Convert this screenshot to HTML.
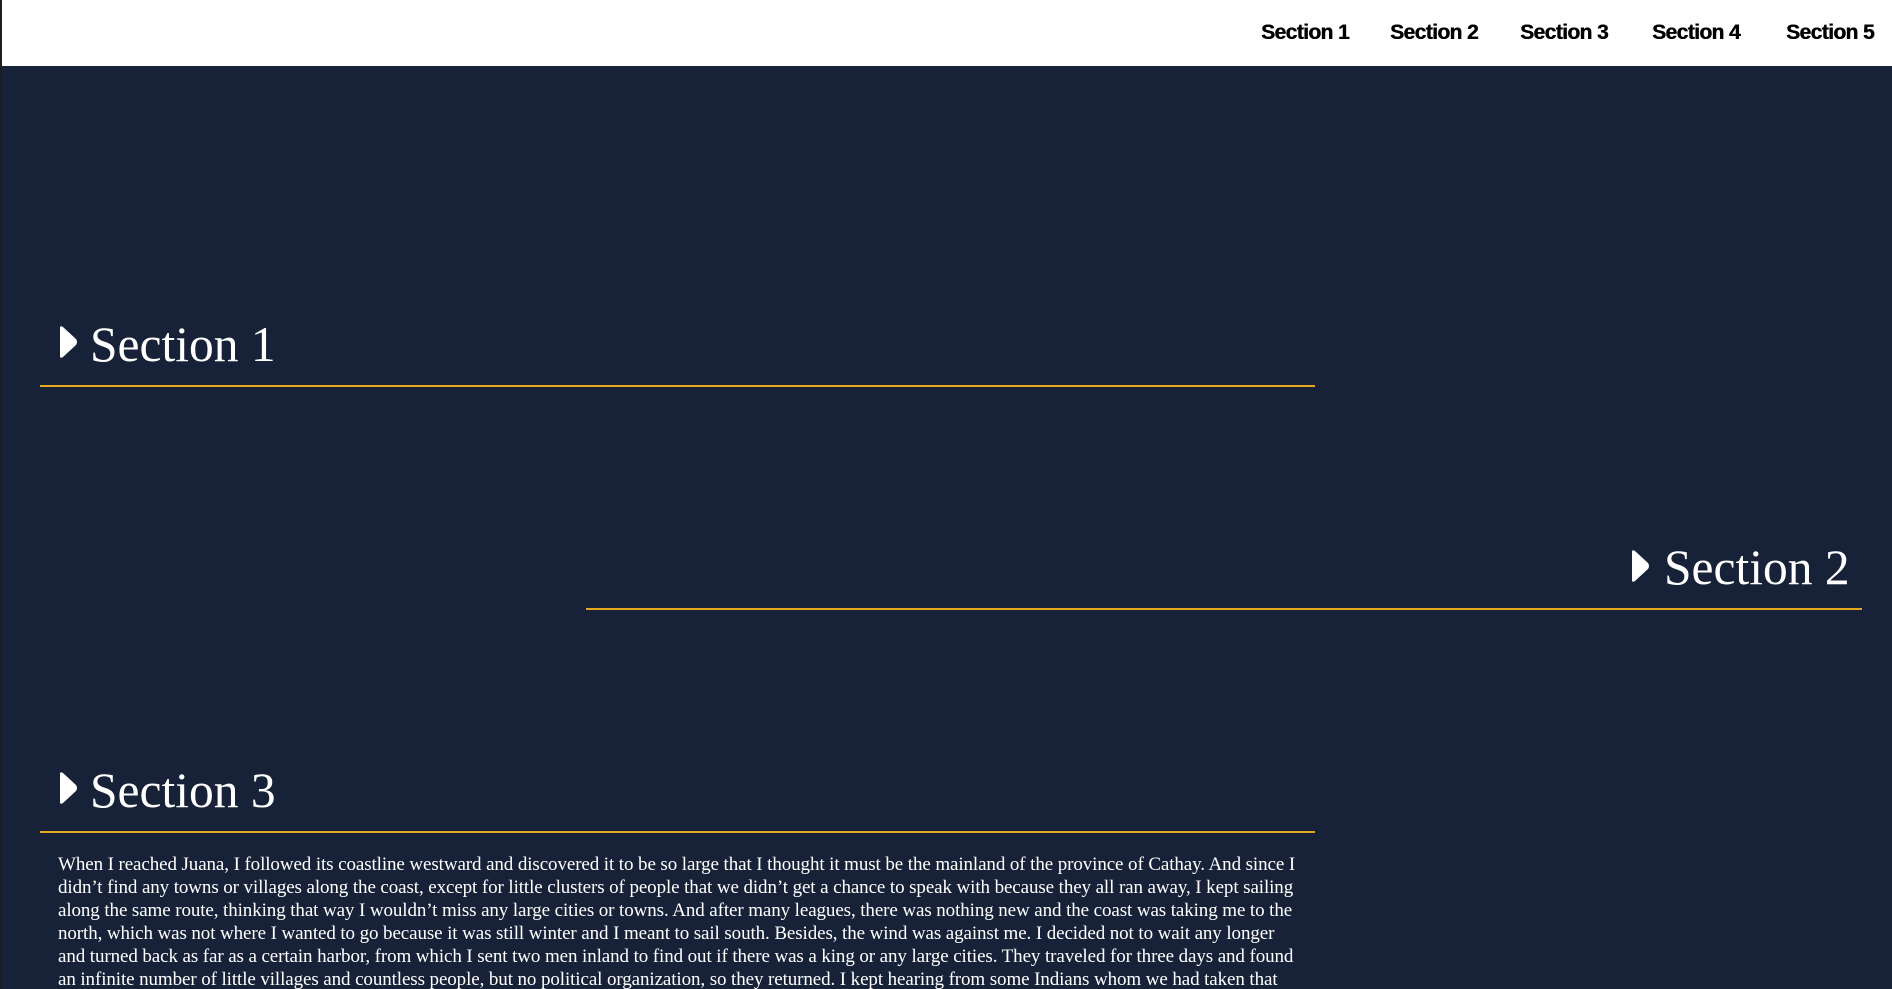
<!DOCTYPE html>
<html><head><meta charset="utf-8">
<style>
html,body{margin:0;padding:0;width:1892px;height:989px;overflow:hidden;}
body{background:#172239;position:relative;font-family:"Liberation Serif",serif;}
.strip{position:absolute;left:0;top:0;width:2px;height:989px;background:#1e1e1e;}
.nav{position:absolute;left:2px;top:0;right:0;height:66px;background:#fff;}
.nav a{position:absolute;top:21px;font-family:"Liberation Sans",sans-serif;font-weight:bold;font-size:21px;letter-spacing:-0.6px;color:#000;text-decoration:none;white-space:nowrap;text-shadow:0.5px 0 0 #000;}
.h{position:absolute;color:#fff;font-size:49.5px;line-height:1;white-space:nowrap;}
.tri{position:absolute;width:20px;height:34px;}
.line{position:absolute;height:2px;background:#e3a81e;}
p{position:absolute;left:58px;top:853px;margin:0;color:#fff;font-size:19px;line-height:23px;white-space:nowrap;letter-spacing:-0.1px;}
</style></head><body>
<div class="strip"></div>
<div class="nav">
<a style="left:1259px">Section 1</a>
<a style="left:1388px">Section 2</a>
<a style="left:1518px">Section 3</a>
<a style="left:1650px">Section 4</a>
<a style="left:1784px">Section 5</a>
</div>

<svg class="tri" style="left:58px;top:325px" viewBox="0 0 20 34"><path d="M2 3 Q2 0 5 2 L18 14 Q20 17 18 20 L5 32 Q2 34 2 31 Z" fill="#fff"/></svg>
<div class="h" style="left:90px;top:320px">Section 1</div>
<div class="line" style="left:40px;top:385px;width:1275px"></div>

<svg class="tri" style="left:1630px;top:549px" viewBox="0 0 20 34"><path d="M2 3 Q2 0 5 2 L18 14 Q20 17 18 20 L5 32 Q2 34 2 31 Z" fill="#fff"/></svg>
<div class="h" style="left:1664px;top:543px">Section 2</div>
<div class="line" style="left:586px;top:608px;width:1276px"></div>

<svg class="tri" style="left:58px;top:771px" viewBox="0 0 20 34"><path d="M2 3 Q2 0 5 2 L18 14 Q20 17 18 20 L5 32 Q2 34 2 31 Z" fill="#fff"/></svg>
<div class="h" style="left:90px;top:766px">Section 3</div>
<div class="line" style="left:40px;top:831px;width:1275px"></div>

<p>When I reached Juana, I followed its coastline westward and discovered it to be so large that I thought it must be the mainland of the province of Cathay. And since I<br>didn’t find any towns or villages along the coast, except for little clusters of people that we didn’t get a chance to speak with because they all ran away, I kept sailing<br>along the same route, thinking that way I wouldn’t miss any large cities or towns. And after many leagues, there was nothing new and the coast was taking me to the<br>north, which was not where I wanted to go because it was still winter and I meant to sail south. Besides, the wind was against me. I decided not to wait any longer<br>and turned back as far as a certain harbor, from which I sent two men inland to find out if there was a king or any large cities. They traveled for three days and found<br>an infinite number of little villages and countless people, but no political organization, so they returned. I kept hearing from some Indians whom we had taken that</p>
</body></html>
